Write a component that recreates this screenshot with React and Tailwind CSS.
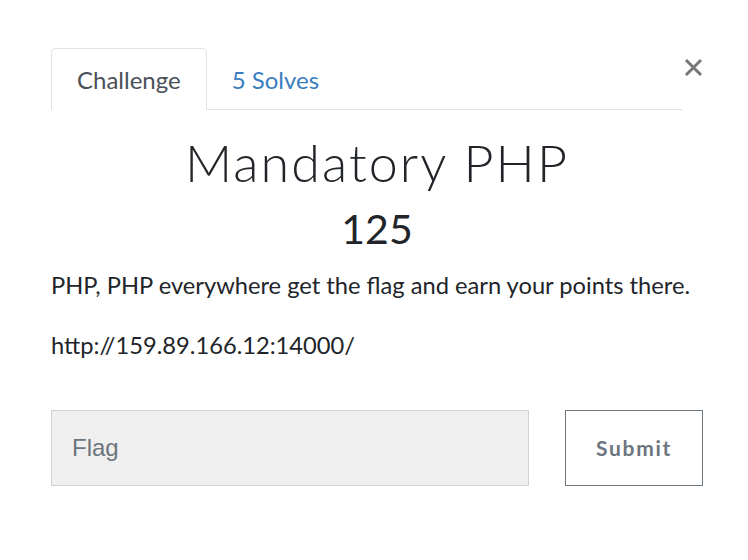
export default function App() {
    return (
        <div className="w-[748px] h-[560px] bg-white pl-[51px] pr-[45px] pt-[48px] text-[#212529] font-['Lato','Noto_Sans',sans-serif]">
            <div className="flex items-start">
                <div className="flex-1 flex border-b border-[#dee2e6] h-[62px]">
                    <div className="h-[62px] px-[25px] pt-[2px] flex items-center border border-[#dee2e6] border-b-white rounded-t-[5px] -mb-px text-[24px] text-[#495057] bg-white">
                        Challenge
                    </div>
                    <div className="h-[61px] px-[25px] pt-[2px] flex items-center text-[24px] text-[#3a7dbf]">
                        5 Solves
                    </div>
                </div>
                <button className="w-[21px] mt-[10px] flex justify-end">
                    <svg width="19" height="19" viewBox="0 0 19 19" className="text-[#777]">
                        <path d="M2 2 L17 17 M17 2 L2 17" stroke="currentColor" strokeWidth="3" />
                    </svg>
                </button>
            </div>

            <h2 className="mt-[24px] text-center text-[52px] leading-[56px] font-light tracking-[0.04em]">
                Mandatory PHP
            </h2>
            <h3 className="mt-[14px] text-center text-[41px] leading-[50px]">125</h3>

            <p className="mt-[14px] text-[23.7px] leading-[34px]">
                PHP, PHP everywhere get the flag and earn your points there.
            </p>
            <p className="mt-[26px] text-[23.7px] leading-[34px]">http://159.89.166.12:14000/</p>

            <div className="mt-[48px] flex gap-[36px]">
                <input
                    placeholder="Flag"
                    className="w-[478px] shrink-0 h-[76px] bg-[#efefef] border border-[#ced4da] px-[20px] text-[24px] font-['Liberation_Sans',sans-serif] placeholder:text-[#6c757d] outline-none"
                />
                <button className="w-[138px] shrink-0 h-[76px] border border-[#6c757d] text-[#6c757d] text-[21px] font-bold tracking-[0.08em]">
                    Submit
                </button>
            </div>
        </div>
    );
}
